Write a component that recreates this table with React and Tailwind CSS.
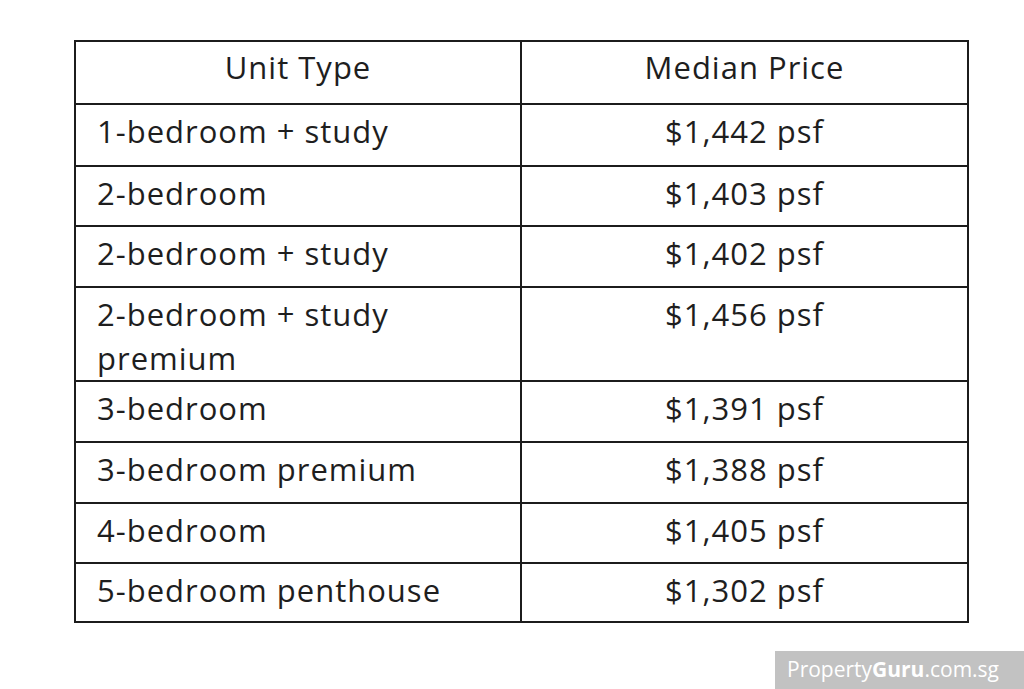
const ROWS = [
  { unit: ['1-bedroom + study'], price: '$1,442 psf', h: 'h-[62px]' },
  { unit: ['2-bedroom'], price: '$1,403 psf', h: 'h-[60px]' },
  { unit: ['2-bedroom + study'], price: '$1,402 psf', h: 'h-[61px]' },
  { unit: ['2-bedroom + study', 'premium'], price: '$1,456 psf', h: 'h-[93px]' },
  { unit: ['3-bedroom'], price: '$1,391 psf', h: 'h-[61px]' },
  { unit: ['3-bedroom premium'], price: '$1,388 psf', h: 'h-[61px]' },
  { unit: ['4-bedroom'], price: '$1,405 psf', h: 'h-[60px]' },
  { unit: ['5-bedroom penthouse'], price: '$1,302 psf', h: 'h-[59px]' },
];

export default function App() {
  return (
    <div className="flex min-h-[689px] w-[1024px] flex-col bg-white font-['Open_Sans',_'Lato',_sans-serif] text-[#1e1e1e]">
      <div className="pl-[74px] pt-[40px]">
        <table className="w-[895px] border-collapse text-[31px] tracking-[1px]">
          <thead>
            <tr className="h-[63px]">
              <th className="w-[446px] border-2 border-[#1c1c1c] align-top pt-[3px] font-medium leading-[44px]">Unit Type</th>
              <th className="border-2 border-[#1c1c1c] align-top pt-[3px] font-medium leading-[44px]">Median Price</th>
            </tr>
          </thead>
          <tbody className="font-medium">
            {ROWS.map(r => (
              <tr key={r.unit.join(' ')} className={r.h}>
                <td className="border-2 border-[#1c1c1c] px-[21px] pt-[4px] align-top leading-[44px]">
                  {r.unit.map((l, i) => <div key={i}>{l}</div>)}
                </td>
                <td className="border-2 border-[#1c1c1c] pt-[4px] text-center align-top leading-[44px]">{r.price}</td>
              </tr>
            ))}
          </tbody>
        </table>
      </div>
      <div className="mt-auto flex justify-end">
        <div className="flex h-[38px] w-[249px] items-center bg-[#c2c2c2] pl-[12px] text-[21px] text-white">
          Property<span className="font-bold">Guru</span>.com.sg
        </div>
      </div>
    </div>
  );
}
